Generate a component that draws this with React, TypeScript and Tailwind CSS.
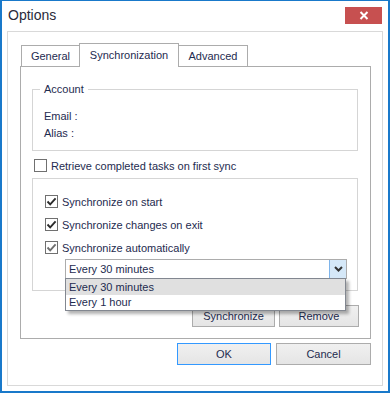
import type { ReactNode } from 'react';

const ink = 'text-[#1e2b4f]';

function CheckBox({ checked = false, faded = false }: { checked?: boolean; faded?: boolean }) {
  return (
    <span className="flex size-[13px] shrink-0 items-center justify-center border border-[#707070] bg-white">
      {checked ? (
        <svg width="11" height="11" viewBox="0 0 11 11">
          <path d="M1.5 5.5 L4.2 8.3 L9.6 2.4" fill="none" stroke={faded ? '#6f6f6f' : '#2b2b2b'} strokeWidth="1.9" />
        </svg>
      ) : null}
    </span>
  );
}

function CheckRow({ label, checked, faded, className }: { label: string; checked?: boolean; faded?: boolean; className?: string }) {
  return (
    <div className={`flex h-[13px] items-center gap-[4px] ${className ?? ''}`}>
      <CheckBox checked={checked} faded={faded} />
      <span className={`whitespace-nowrap text-[11px] leading-[16px] ${ink}`}>{label}</span>
    </div>
  );
}

function Button({ children, width, primary = false }: { children: ReactNode; width: string; primary?: boolean }) {
  return (
    <button
      type="button"
      className={`flex h-[22px] items-center justify-center border bg-gradient-to-b from-[#f0f0f0] to-[#e5e5e5] text-[11px] leading-[16px] ${ink} ${width} ${
        primary ? 'border-[#3399ff]' : 'border-[#acacac]'
      }`}
    >
      {children}
    </button>
  );
}

function Tab({ label, active = false, className }: { label: string; active?: boolean; className: string }) {
  return (
    <div
      className={`flex items-center justify-center border border-b-0 border-[#acacac] bg-white text-[11px] leading-[16px] ${ink} ${
        active ? 'relative z-10 -mb-px h-[24px] pb-[1px]' : 'h-[21px]'
      } ${className}`}
    >
      {label}
    </div>
  );
}

export default function App() {
  return (
    <div className="flex h-[393px] w-[390px] flex-col border-x-2 border-b-2 border-t border-[#1979ca] bg-white [font-family:'Liberation_Sans',Arial,sans-serif]">
      <div className="flex h-[30px] shrink-0 items-start justify-between pl-[6px] pr-[6px]">
        <span className="text-[14px] leading-[28px] text-[#2a2a3a]">Options</span>
        <button type="button" aria-label="Close" className="mt-[6px] flex h-[17px] w-[37px] items-center justify-center bg-[#c75050]">
          <svg width="10" height="9" viewBox="0 0 10 9">
            <path d="M1.5 1 L8.5 8 M8.5 1 L1.5 8" stroke="#ffffff" strokeWidth="2" />
          </svg>
        </button>
      </div>

      <div className="mx-[5px] mb-[5px] flex flex-1 flex-col border border-[#d9d9d9] pl-[12px] pr-[10px] pt-[11px]">
        <div className="flex h-[23px] items-end">
          <Tab label="General" className="ml-[1px] w-[59px]" />
          <Tab label="Synchronization" active className="-ml-px w-[100px]" />
          <Tab label="Advanced" className="-ml-px w-[70px]" />
        </div>

        <div className="flex h-[273px] w-[351px] flex-col border border-[#acacac] bg-white pl-[11px] pr-[12px]">
          <div className="relative mt-[22px] h-[62px] border border-[#d5d5d5] pl-[11px] pt-[18px]">
            <span className={`absolute left-[7px] top-[-9px] bg-white px-[4px] text-[11px] leading-[16px] ${ink}`}>Account</span>
            <div className={`text-[11px] leading-[17px] ${ink}`}>Email :</div>
            <div className={`text-[11px] leading-[17px] ${ink}`}>Alias :</div>
          </div>

          <CheckRow label="Retrieve completed tasks on first sync" className="ml-[2px] mt-[8px]" />

          <div className="mt-[6px] flex h-[113px] flex-col border border-[#d5d5d5] pl-[12px] pt-[16px]">
            <div className="flex flex-col gap-[10px]">
              <CheckRow label="Synchronize on start" checked />
              <CheckRow label="Synchronize changes on exit" checked />
              <CheckRow label="Synchronize automatically" checked faded />
            </div>

            <div className="relative ml-[20px] mt-[5px] flex h-[20px] w-[282px] border border-[#acacac] bg-white">
              <span className={`flex-1 pl-[3px] text-[11px] leading-[18px] ${ink}`}>Every 30 minutes</span>
              <span className="flex w-[17px] items-center justify-center border-l border-[#7eb4ea] bg-[#d5e8f8]">
                <svg width="9" height="6" viewBox="0 0 9 6">
                  <path d="M1 1 L4.5 4.5 L8 1" fill="none" stroke="#333333" strokeWidth="2" />
                </svg>
              </span>

              <div className="absolute left-[-1px] top-[18px] z-20 flex w-[281px] flex-col border border-[#828790] bg-white shadow-[3px_3px_3px_rgba(0,0,0,0.3)]">
                <div className={`h-[16px] bg-[#e0e0e0] pl-[3px] text-[11px] leading-[16px] ${ink}`}>Every 30 minutes</div>
                <div className={`h-[15px] pl-[3px] text-[11px] leading-[15px] ${ink}`}>Every 1 hour</div>
              </div>
            </div>
          </div>

          <div className="mr-[-1px] mt-[14px] flex justify-end gap-[4px]">
            <Button width="w-[83px]">Synchronize</Button>
            <Button width="w-[80px]">Remove</Button>
          </div>
        </div>

        <div className="mr-[-1px] mt-[4px] flex w-[351px] justify-end gap-[5px]">
          <Button width="w-[94px]" primary>OK</Button>
          <Button width="w-[95px]">Cancel</Button>
        </div>
      </div>
    </div>
  );
}
